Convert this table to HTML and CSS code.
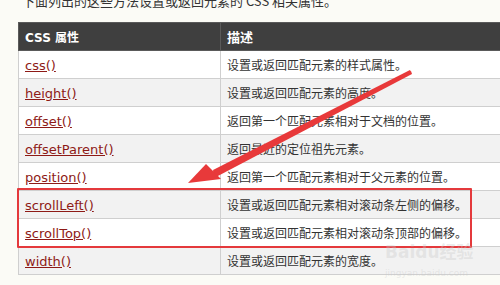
FILE: index.html
```html
<!DOCTYPE html>
<html>
<head>
<meta charset="utf-8">
<link rel="stylesheet" href="styles.css">
</head>
<body>
<div class="page">
  <p class="intro">下面列出的这些方法设置或返回元素的 CSS 相关属性。</p>
  <table class="ref">
    <tr class="head"><th class="c1">CSS 属性</th><th>描述</th></tr>
    <tr><td class="c1"><a>css()</a></td><td>设置或返回匹配元素的样式属性。</td></tr>
    <tr class="alt"><td class="c1"><a>height()</a></td><td>设置或返回匹配元素的高度。</td></tr>
    <tr><td class="c1"><a>offset()</a></td><td>返回第一个匹配元素相对于文档的位置。</td></tr>
    <tr class="alt"><td class="c1"><a>offsetParent()</a></td><td>返回最近的定位祖先元素。</td></tr>
    <tr><td class="c1"><a>position()</a></td><td>返回第一个匹配元素相对于父元素的位置。</td></tr>
    <tr class="alt"><td class="c1"><a>scrollLeft()</a></td><td>设置或返回匹配元素相对滚动条左侧的偏移。</td></tr>
    <tr><td class="c1"><a>scrollTop()</a></td><td>设置或返回匹配元素相对滚动条顶部的偏移。</td></tr>
    <tr class="alt"><td class="c1"><a>width()</a></td><td>设置或返回匹配元素的宽度。</td></tr>
  </table>
  <div class="highlight"></div>
  <svg class="arrow" width="500" height="285" viewBox="0 0 500 285">
    <polygon points="410,70 411,72 222,170 214,174 213,170" fill="#e8393a"/>
    <polygon points="411,71 412,74 216,177 212,172" fill="#e8393a"/>
    <polygon points="188,183 206,164 221,179" fill="#e8393a"/>
  </svg>
  <div class="watermark">Bai<span class="du">du</span>经验<br><span class="url">jingyan.baidu.com</span></div>
</div>
</body>
</html>
```
FILE: styles.css
```css
html, body {
  margin: 0;
  padding: 0;
  overflow: hidden;
  background: #fbfbf6;
}
.page {
  position: relative;
  width: 500px;
  height: 285px;
  overflow: hidden;
}
.intro {
  margin: -7px 0 0 22px;
  height: 29px;
  font-family: "Noto Sans CJK SC", sans-serif;
  font-size: 13px;
  line-height: 16px;
  color: #333;
}
.ref {
  margin-left: 18px;
  width: 520px;
  border-collapse: collapse;
  table-layout: fixed;
}
.ref th, .ref td {
  height: 27px;
  padding: 0 6px;
  text-align: left;
  border: 1px solid #cfcfcf;
  vertical-align: middle;
}
.ref .c1 {
  width: 189px;
}
.head th {
  background: #3f3f3f;
  border-color: #5a5a5a;
  color: #fff;
  font-family: "Noto Sans CJK SC", "DejaVu Sans", sans-serif;
  font-weight: bold;
  font-size: 13px;
}
.head th.c1 {
  font-family: "DejaVu Sans", "Noto Sans CJK SC", sans-serif;
  font-size: 12px;
}
.ref td {
  background: #fff;
  font-family: "Noto Sans CJK SC", sans-serif;
  font-size: 12px;
  color: #333;
}
.ref tr.alt td {
  background: #f2f2f2;
}
.ref a {
  font-family: "DejaVu Sans", sans-serif;
  font-size: 13px;
  color: #8e1a16;
  text-decoration: underline;
}
.highlight {
  position: absolute;
  left: 17px;
  top: 188px;
  width: 451px;
  height: 56px;
  border: 2px solid #e4393c;
  border-radius: 1px;
}
.arrow {
  position: absolute;
  left: 0;
  top: 0;
}
.watermark {
  position: absolute;
  left: 385px;
  top: 243px;
  font-family: "DejaVu Sans", "Noto Sans CJK SC", sans-serif;
  font-size: 17px;
  font-weight: bold;
  line-height: 18px;
  color: rgba(200, 200, 200, 0.35);
}
.watermark .url {
  font-size: 9px;
  font-weight: normal;
  line-height: 12px;
}
```
